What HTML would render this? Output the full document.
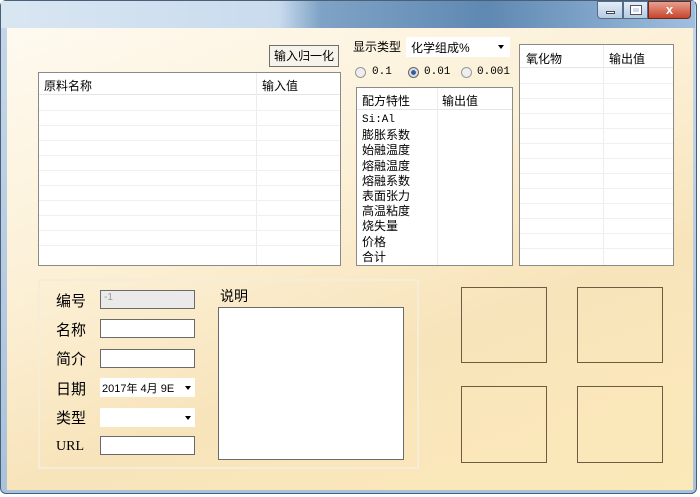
<!DOCTYPE html>
<html><head><meta charset="utf-8"><style>
*{margin:0;padding:0;box-sizing:border-box}
body{width:700px;height:497px;overflow:hidden;background:#fff;font-family:"Liberation Sans","Noto Sans CJK SC",sans-serif;font-size:12px;color:#000;position:relative}
.a{position:absolute}
#win{left:0;top:0;width:697px;height:494px;border-radius:6px;background:linear-gradient(180deg,#c5d7ea,#a9c2dc);border:1px solid #4a6078}
#title{left:1px;top:1px;width:694px;height:27px;background:linear-gradient(90deg,#d9e6f2 0%,#c9dbee 40%,#7fa3c6 46%,#5f88b2 70%,#9fbfdf 100%)}
#client{left:7px;top:28px;width:686px;height:462px;background:linear-gradient(160deg,#fefaf0 0%,#fcf1d8 35%,#f8e4bb 65%,#fbe9b9 100%)}
.grid{background:#fff;border:1px solid #8a8a8a}
.hdr{position:absolute;left:0;right:0;top:0;border-bottom:1px solid #e6e6e6;background:#fff}
.vl{position:absolute;top:0;bottom:0;width:1px;background:#ececec}
.hl{position:absolute;left:0;right:0;height:1px;background:#f0f0f0}
.box{border:1px solid #6e5c40}
.inp{background:#fff;border:1px solid #6a6a6a;height:19px}
.lbl{font-size:15px}
.arr{position:absolute;width:0;height:0;border-left:3px solid transparent;border-right:3px solid transparent;border-top:4px solid #000}
</style></head><body>
<div id="win" class="a"></div>
<div id="title" class="a"></div>
<div class="a" style="left:597px;top:1px;width:26px;height:18px;border:1px solid #566c86;border-radius:0 0 0 4px;background:linear-gradient(#e4eef8,#b6cbe2)"><div class="a" style="left:8px;top:9px;width:9px;height:3px;background:#fff;border:1px solid #445"></div></div>
<div class="a" style="left:623px;top:1px;width:25px;height:18px;border:1px solid #566c86;background:linear-gradient(#e4eef8,#b6cbe2)"><div class="a" style="left:7px;top:4px;width:10px;height:8px;border:2px solid #fff;outline:1px solid #556"></div></div>
<div class="a" style="left:648px;top:1px;width:43px;height:18px;border:1px solid #6b2a20;border-radius:0 0 4px 0;background:linear-gradient(#e9a08f,#c6442c);color:#fff;font-weight:bold;text-align:center;line-height:16px;font-size:13px">x</div>
<div id="client" class="a"></div>

<div class="a" style="left:269px;top:45px;width:70px;height:22px;border:1px solid #707070;background:#f6f3ec;text-align:center;line-height:20px">输入归一化</div>

<div class="a grid" style="left:38px;top:72px;width:303px;height:194px">
<div class="hdr" style="height:22px;padding:4px 0 0 5px">原料名称<span class="a" style="left:223px;top:4px">输入值</span></div>
<div class="vl" style="left:217px"></div>
<div class="hl" style="top:37px"></div><div class="hl" style="top:52px"></div><div class="hl" style="top:67px"></div><div class="hl" style="top:82px"></div><div class="hl" style="top:97px"></div><div class="hl" style="top:112px"></div><div class="hl" style="top:127px"></div><div class="hl" style="top:142px"></div><div class="hl" style="top:157px"></div><div class="hl" style="top:172px"></div>
</div>

<div class="a" style="left:353px;top:38px">显示类型</div>
<div class="a" style="left:406px;top:37px;width:104px;height:20px;background:#fff;padding:2px 0 0 5px">化学组成%<span class="arr" style="left:92px;top:8px"></span></div>
<div class="a" style="left:355px;top:67px;width:11px;height:11px;border-radius:50%;border:1px solid #999;background:#eee"></div>
<div class="a" style="left:372px;top:66px;font-family:'Liberation Mono',monospace;font-size:11px">0.1</div>
<div class="a" style="left:408px;top:67px;width:11px;height:11px;border-radius:50%;border:1px solid #666;background:radial-gradient(#2a5ea8 35%,#ddd 40%)"></div>
<div class="a" style="left:424px;top:66px;font-family:'Liberation Mono',monospace;font-size:11px">0.01</div>
<div class="a" style="left:461px;top:67px;width:11px;height:11px;border-radius:50%;border:1px solid #999;background:#eee"></div>
<div class="a" style="left:477px;top:66px;font-family:'Liberation Mono',monospace;font-size:11px">0.001</div>

<div class="a grid" style="left:356px;top:87px;width:157px;height:179px">
<div class="hdr" style="height:22px;padding:4px 0 0 5px">配方特性<span class="a" style="left:85px;top:4px">输出值</span></div>
<div class="vl" style="left:80px"></div>
<div class="a" style="left:5px;top:23px;line-height:15.2px"><span style="font-family:'Liberation Mono',monospace;font-size:11px">Si:Al</span><br>膨胀系数<br>始融温度<br>熔融温度<br>熔融系数<br>表面张力<br>高温粘度<br>烧失量<br>价格<br>合计</div>
</div>

<div class="a grid" style="left:519px;top:44px;width:155px;height:222px">
<div class="hdr" style="height:23px;padding:5px 0 0 6px">氧化物<span class="a" style="left:89px;top:5px">输出值</span></div>
<div class="vl" style="left:83px"></div>
<div class="hl" style="top:38px"></div><div class="hl" style="top:53px"></div><div class="hl" style="top:68px"></div><div class="hl" style="top:83px"></div><div class="hl" style="top:98px"></div><div class="hl" style="top:113px"></div><div class="hl" style="top:128px"></div><div class="hl" style="top:143px"></div><div class="hl" style="top:158px"></div><div class="hl" style="top:173px"></div><div class="hl" style="top:188px"></div><div class="hl" style="top:203px"></div>
</div>

<div class="a" style="left:38px;top:279px;width:381px;height:190px;border:2px solid #f6edd8"></div>
<div class="a lbl" style="left:56px;top:290px">编号</div>
<div class="a lbl" style="left:56px;top:319px">名称</div>
<div class="a lbl" style="left:56px;top:348px">简介</div>
<div class="a lbl" style="left:56px;top:378px">日期</div>
<div class="a lbl" style="left:56px;top:407px">类型</div>
<div class="a" style="left:56px;top:439px;font-family:'Liberation Serif',serif;font-size:14px">URL</div>
<div class="a inp" style="left:100px;top:290px;width:95px;background:#eaeaea;color:#999;font-size:10px;padding:1px 3px">-1</div>
<div class="a inp" style="left:100px;top:319px;width:95px"></div>
<div class="a inp" style="left:100px;top:349px;width:95px"></div>
<div class="a" style="left:100px;top:378px;width:95px;height:19px;background:#fff;font-size:11px;padding:2px 2px">2017年 4月 9E<span class="arr" style="left:85px;top:8px"></span></div>
<div class="a" style="left:100px;top:408px;width:95px;height:19px;background:#fff"><span class="arr" style="left:85px;top:8px"></span></div>
<div class="a inp" style="left:100px;top:436px;width:95px"></div>
<div class="a" style="left:220px;top:286px;font-size:14px">说明</div>
<div class="a" style="left:218px;top:307px;width:186px;height:153px;background:#fff;border:1px solid #6a6a6a"></div>

<div class="a box" style="left:461px;top:287px;width:86px;height:76px"></div>
<div class="a box" style="left:577px;top:287px;width:86px;height:76px"></div>
<div class="a box" style="left:461px;top:386px;width:86px;height:77px"></div>
<div class="a box" style="left:577px;top:386px;width:86px;height:77px"></div>
</body></html>
